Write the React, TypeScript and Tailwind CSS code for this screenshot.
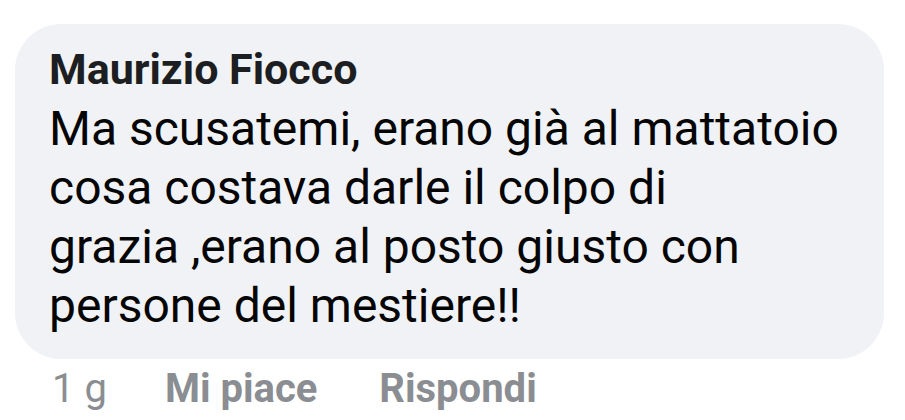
const lines = [
  "Ma scusatemi, erano già al mattatoio",
  "cosa costava darle il colpo di",
  "grazia ,erano al posto giusto con",
  "persone del mestiere!!",
];

const App = () => {
  return (
    <div className="w-[905px] h-[420px] bg-white pt-[24px] pl-[15px] font-['Roboto',sans-serif] overflow-hidden">
      {/* ----- Comment bubble ----- */}
      <div className="w-[869px] rounded-[46px] bg-[#f0f2f5] pl-[34px] pr-[30px] pt-[21px] pb-[24px]">
        {/* --- Author --- */}
        <div className="text-[43px] leading-[48px] font-bold text-[#1c1e21]">
          Maurizio Fiocco
        </div>

        {/* --- Text --- */}
        <div className="mt-[6px] text-[48px] leading-[59px] text-[#050505]">
          {lines.map((line) => (
            <div key={line}>{line}</div>
          ))}
        </div>
      </div>

      {/* ----- Actions ----- */}
      <div className="mt-[6px] ml-[37px] flex items-center text-[40px] leading-[48px] text-[#8a8d91]">
        <span>1 g</span>
        <span className="ml-[58px] font-bold">Mi piace</span>
        <span className="ml-[62px] font-bold">Rispondi</span>
      </div>
    </div>
  );
};

export default App;
